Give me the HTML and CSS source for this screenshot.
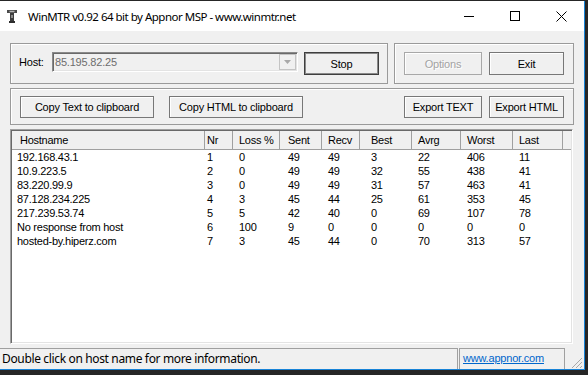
FILE: index.html
```html
<!DOCTYPE html>
<html lang="en">
<head>
  <meta charset="UTF-8">
  <title>WinMTR v0.92 64 bit by Appnor MSP - www.winmtr.net</title>
  <link rel="stylesheet" href="styles.css">
</head>
<body>
  <div class="window">
    <div class="titlebar">
      <svg class="app-icon" width="10" height="13" viewBox="0 0 10 13">
        <rect x="0" y="0" width="10" height="3" fill="#4a4a4a"/>
        <rect x="2.5" y="0.8" width="5" height="1.4" fill="#b5b5b5"/>
        <rect x="3" y="3" width="4" height="8" fill="#3c3c3c"/>
        <rect x="4" y="5" width="2" height="3" fill="#8a8a8a"/>
        <rect x="2" y="11" width="6" height="2" fill="#2e2e2e"/>
      </svg>
      <span class="title">WinMTR v0.92 64 bit by Appnor MSP - www.winmtr.net</span>
      <div class="caption">
        <span class="cap-btn">
          <svg width="10" height="10" viewBox="0 0 10 10"><path d="M0 5.5H10" stroke="#000" stroke-width="1"/></svg>
        </span>
        <span class="cap-btn">
          <svg width="10" height="10" viewBox="0 0 10 10"><rect x="0.5" y="0.5" width="9" height="9" fill="none" stroke="#000" stroke-width="1"/></svg>
        </span>
        <span class="cap-btn">
          <svg width="11" height="11" viewBox="0 0 11 11"><path d="M0.5 0.5L10.5 10.5M10.5 0.5L0.5 10.5" stroke="#000" stroke-width="1"/></svg>
        </span>
      </div>
    </div>

    <div class="client">
      <div class="top-row">
        <div class="group host-group">
          <label class="host-label">Host:</label>
          <div class="combo">
            <span class="combo-text">85.195.82.25</span>
            <span class="combo-arrow">
              <svg width="7" height="4" viewBox="0 0 7 4"><path d="M0 0H7L3.5 4Z" fill="#a8a8a8"/></svg>
            </span>
          </div>
          <button class="btn btn-default stop-btn">Stop</button>
        </div>
        <div class="group app-group">
          <button class="btn btn-options" disabled>Options</button>
          <button class="btn btn-exit">Exit</button>
        </div>
      </div>

      <div class="group export-group">
        <button class="btn btn-copy">Copy Text to clipboard</button>
        <button class="btn btn-copy">Copy HTML to clipboard</button>
        <button class="btn btn-options export-first">Export TEXT</button>
        <button class="btn btn-exit">Export HTML</button>
      </div>

      <div class="list">
        <table class="report">
          <colgroup>
            <col class="c-host"><col class="c-nr"><col class="c-loss"><col class="c-sent"><col class="c-recv">
            <col class="c-best"><col class="c-avrg"><col class="c-worst"><col class="c-last"><col class="c-fill">
          </colgroup>
          <thead>
            <tr>
              <th>Hostname</th><th>Nr</th><th>Loss %</th><th>Sent</th><th>Recv</th>
              <th>Best</th><th>Avrg</th><th>Worst</th><th>Last</th><th class="fill"></th>
            </tr>
          </thead>
          <tbody>
            <tr><td>192.168.43.1</td><td>1</td><td>0</td><td>49</td><td>49</td><td>3</td><td>22</td><td>406</td><td>11</td><td></td></tr>
            <tr><td>10.9.223.5</td><td>2</td><td>0</td><td>49</td><td>49</td><td>32</td><td>55</td><td>438</td><td>41</td><td></td></tr>
            <tr><td>83.220.99.9</td><td>3</td><td>0</td><td>49</td><td>49</td><td>31</td><td>57</td><td>463</td><td>41</td><td></td></tr>
            <tr><td>87.128.234.225</td><td>4</td><td>3</td><td>45</td><td>44</td><td>25</td><td>61</td><td>353</td><td>45</td><td></td></tr>
            <tr><td>217.239.53.74</td><td>5</td><td>5</td><td>42</td><td>40</td><td>0</td><td>69</td><td>107</td><td>78</td><td></td></tr>
            <tr><td>No response from host</td><td>6</td><td>100</td><td>9</td><td>0</td><td>0</td><td>0</td><td>0</td><td>0</td><td></td></tr>
            <tr><td>hosted-by.hiperz.com</td><td>7</td><td>3</td><td>45</td><td>44</td><td>0</td><td>70</td><td>313</td><td>57</td><td></td></tr>
          </tbody>
        </table>
      </div>

      <div class="statusbar">
        <div class="status-main">Double click on host name for more information.</div>
        <div class="status-link"><a href="#">www.appnor.com</a></div>
        <svg class="grip" width="12" height="12" viewBox="0 0 12 12">
          <path d="M11 1L1 11M11 5L5 11M11 9L9 11" stroke="#a8a8a8" stroke-width="1"/>
        </svg>
      </div>
    </div>
  </div>
</body>
</html>
```

FILE: styles.css
```css
body {
  margin: 0;
  background-color: #262626;
  font-family: "Liberation Sans", Arial, sans-serif;
  font-size: 11px;
  color: #000;
}
.window {
  width: 584px;
  margin-top: 1px;
  background-color: #f0f0f0;
  border-right: 1px solid #1883d7;
  border-bottom: 1px solid #1883d7;
}
.titlebar {
  height: 30px;
  background-color: #fff;
  display: flex;
  align-items: center;
}
.app-icon {
  margin-left: 7px;
  flex: none;
}
.title {
  margin-left: 11px;
  font-family: "Noto Sans", sans-serif;
  font-size: 11.5px;
  letter-spacing: -0.5px;
}
.caption {
  margin-left: auto;
  display: flex;
  height: 30px;
}
.cap-btn {
  width: 46px;
  display: flex;
  align-items: center;
  justify-content: center;
}

/* dialog body */
.client {
  height: 338px;
  box-sizing: border-box;
  padding-top: 12px;
  display: flex;
  flex-direction: column;
}
.top-row {
  display: flex;
  gap: 6px;
  margin-left: 10px;
}
.group {
  box-sizing: border-box;
  border: 1px solid #9a9a9a;
  box-shadow: inset 1px 1px 0 #fff;
  display: flex;
  align-items: flex-start;
}
.host-group {
  width: 378px;
  height: 41px;
  padding: 8px 8px 0;
}
.host-label {
  width: 33px;
  line-height: 20px;
  letter-spacing: -0.2px;
}
.combo {
  width: 246px;
  height: 20px;
  box-sizing: border-box;
  padding: 1px;
  border: 1px solid;
  border-color: #8a8a8a #fff #fff #8a8a8a;
  box-shadow: inset 1px 1px 0 #6a6a6a, inset -1px -1px 0 #e3e3e3;
  display: flex;
  align-items: center;
}
.combo-text {
  flex: 1;
  padding-left: 1px;
  color: #6d6d6d;
  letter-spacing: -0.2px;
}
.combo-arrow {
  width: 17px;
  height: 16px;
  box-sizing: border-box;
  border: 1px solid #c4c4c4;
  display: flex;
  align-items: center;
  justify-content: center;
}
.btn {
  box-sizing: border-box;
  height: 23px;
  margin: 0;
  padding: 0;
  background-color: #f0f0f0;
  border: 1px solid #777;
  box-shadow: inset 1px 1px 0 #fff;
  font-family: "Liberation Sans", Arial, sans-serif;
  font-size: 11px;
  letter-spacing: -0.2px;
  color: #000;
}
.btn-default {
  border-color: #3f3f3f;
  box-shadow: inset 0 0 0 1px #8a8a8a;
}
.btn:disabled {
  color: #a3a3a3;
  border-color: #a8a8a8;
  text-shadow: 1px 1px 0 #fff;
}
.stop-btn {
  width: 75px;
  margin-left: 6px;
}
.app-group {
  width: 180px;
  height: 41px;
  padding: 8px 9px 0;
  gap: 7px;
}
.btn-options {
  width: 78px;
}
.btn-exit {
  width: 75px;
}
.export-group {
  width: 564px;
  height: 37px;
  margin: 4px 0 0 10px;
  padding: 7px 9px 0;
  gap: 7px;
}
.export-group .btn {
  height: 22px;
}
.btn-copy {
  width: 134px;
}
.btn-copy + .btn-copy {
  margin-left: 8px;
}
.export-first {
  margin-left: auto;
}

/* list view */
.list {
  width: 563px;
  height: 215px;
  margin: 4px 0 0 10px;
  box-sizing: border-box;
  padding: 1px;
  background-color: #fff;
  border: 1px solid;
  border-color: #a0a0a0 #fff #fff #a0a0a0;
  box-shadow: inset 1px 1px 0 #696969, inset -1px -1px 0 #e3e3e3;
  overflow: hidden;
}
.report {
  width: 559px;
  table-layout: fixed;
  border-collapse: separate;
  border-spacing: 0;
  letter-spacing: -0.25px;
}
.c-host { width: 193px; }
.c-nr { width: 28px; }
.c-loss { width: 47px; }
.c-sent { width: 42px; }
.c-recv { width: 38px; }
.c-best { width: 52px; }
.c-avrg { width: 49px; }
.c-worst { width: 52px; }
.c-last { width: 50px; }
.c-fill { width: 8px; }
.report th {
  height: 19px;
  padding: 0 0 0 6px;
  box-sizing: border-box;
  text-align: left;
  font-weight: normal;
  background-color: #f0f0f0;
  border-right: 1px solid #a0a0a0;
  border-bottom: 1px solid #a0a0a0;
  white-space: nowrap;
}
.report th:first-child {
  padding-left: 8px;
}
.report th.fill {
  border-right: none;
}
.report td {
  height: 14px;
  line-height: 14px;
  padding: 0 0 0 6px;
  white-space: nowrap;
  overflow: hidden;
}
.report td:first-child {
  padding-left: 5px;
}
/* Nr sits close to its divider, Best a bit further in */
.report th:nth-child(2),
.report td:nth-child(2) {
  padding-left: 2px;
}
.report th:nth-child(6),
.report td:nth-child(6) {
  padding-left: 11px;
}
.report td:nth-child(4),
.report th:nth-child(4) {
  padding-left: 8px;
}

/* status bar */
.statusbar {
  height: 21px;
  margin-top: 4px;
  display: flex;
}
.status-main {
  width: 458px;
  box-sizing: border-box;
  padding-left: 2px;
  border-top: 1px solid #a0a0a0;
  border-right: 1px solid #a0a0a0;
  font-family: "Noto Sans", sans-serif;
  font-size: 12px;
  letter-spacing: -0.35px;
  line-height: 19px;
}
.status-link {
  width: 106px;
  margin-left: 1px;
  box-sizing: border-box;
  padding-left: 3px;
  border: 1px solid #a0a0a0;
  border-bottom: none;
  line-height: 19px;
}
.status-link a {
  color: #0066cc;
  letter-spacing: -0.2px;
}
.grip {
  margin: auto 1px 0 auto;
}
```
